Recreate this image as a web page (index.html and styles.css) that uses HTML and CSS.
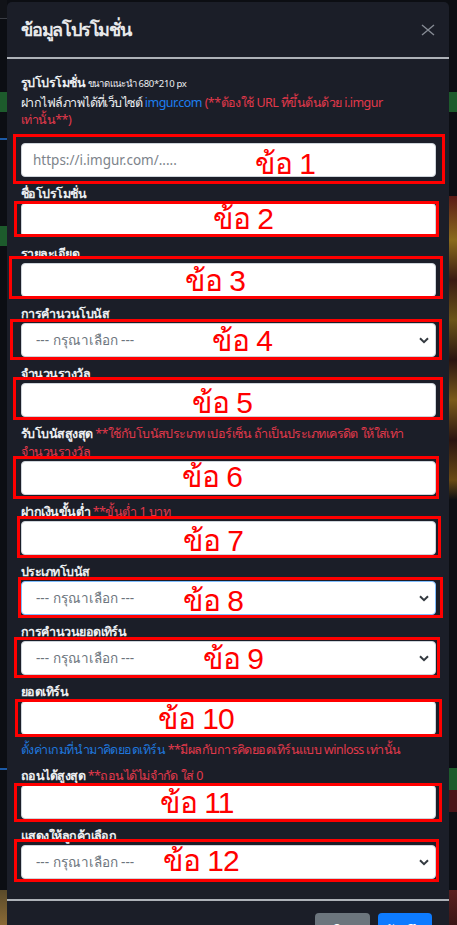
FILE: index.html
```html
<!DOCTYPE html>
<html lang="th">
<head>
<meta charset="utf-8">
<title>ข้อมูลโปรโมชั่น</title>
<link rel="stylesheet" href="styles.css">
</head>
<body>
<div class="modal">
  <div class="modal-header">
    <h5 class="modal-title">ข้อมูลโปรโมชั่น</h5>
    <button class="close" type="button" aria-label="Close">
      <svg width="14" height="12" viewBox="0 0 14 12"><path d="M1 1L13 11M13 1L1 11" stroke="currentColor" stroke-width="1.4" fill="none"/></svg>
    </button>
  </div>
  <div class="modal-body">
    <div class="group first">
      <div class="label l-top"><b>รูปโปรโมชั่น</b> <small>ขนาดแนะนำ 680*210 px</small></div>
      <div class="label l-info">ฝากไฟล์ภาพได้ที่เว็บไซต์ <a class="link">imgur.com</a> <span class="red">(**ต้องใช้ URL ที่ขึ้นต้นด้วย i.imgur<br>เท่านั้น**)</span></div>
      <div class="field m1"><input class="control" type="text" placeholder="https://i.imgur.com/....."><div class="box"></div><span class="tag">ข้อ 1</span></div>
    </div>
    <div class="group">
      <div class="label">ชื่อโปรโมชั่น</div>
      <div class="field m2"><input class="control" type="text"><div class="box"></div><span class="tag">ข้อ 2</span></div>
    </div>
    <div class="group">
      <div class="label">รายละเอียด</div>
      <div class="field m3"><input class="control" type="text"><div class="box"></div><span class="tag">ข้อ 3</span></div>
    </div>
    <div class="group">
      <div class="label">การคำนวนโบนัส</div>
      <div class="field m4"><select class="control select"><option>--- กรุณาเลือก ---</option></select><svg class="chev" width="10" height="7" viewBox="0 0 10 7"><path d="M1 1.2L5 5.2L9 1.2" stroke="#343a40" stroke-width="2" fill="none"/></svg><div class="box"></div><span class="tag">ข้อ 4</span></div>
    </div>
    <div class="group">
      <div class="label">จำนวนรางวัล</div>
      <div class="field m5"><input class="control" type="text"><div class="box"></div><span class="tag">ข้อ 5</span></div>
    </div>
    <div class="group">
      <div class="label">รับโบนัสสูงสุด <span class="red">**ใช้กับโบนัสประเภท เปอร์เซ็น ถ้าเป็นประเภทเครดิต ให้ใส่เท่า<br>จำนวนรางวัล</span></div>
      <div class="field m6"><input class="control" type="text"><div class="box"></div><span class="tag">ข้อ 6</span></div>
    </div>
    <div class="group">
      <div class="label">ฝากเงินขั้นต่ำ <span class="red">**ขั้นต่ำ 1 บาท</span></div>
      <div class="field m7"><input class="control" type="text"><div class="box"></div><span class="tag">ข้อ 7</span></div>
    </div>
    <div class="group">
      <div class="label">ประเภทโบนัส</div>
      <div class="field m8"><select class="control select focus"><option>--- กรุณาเลือก ---</option></select><svg class="chev" width="10" height="7" viewBox="0 0 10 7"><path d="M1 1.2L5 5.2L9 1.2" stroke="#343a40" stroke-width="2" fill="none"/></svg><div class="box"></div><span class="tag">ข้อ 8</span></div>
    </div>
    <div class="group">
      <div class="label">การคำนวนยอดเทิร์น</div>
      <div class="field m9"><select class="control select"><option>--- กรุณาเลือก ---</option></select><svg class="chev" width="10" height="7" viewBox="0 0 10 7"><path d="M1 1.2L5 5.2L9 1.2" stroke="#343a40" stroke-width="2" fill="none"/></svg><div class="box"></div><span class="tag">ข้อ 9</span></div>
    </div>
    <div class="group">
      <div class="label">ยอดเทิร์น</div>
      <div class="field m10"><input class="control" type="text"><div class="box"></div><span class="tag">ข้อ 10</span></div>
      <div class="help"><span class="blue">ตั้งค่าเกมที่นำมาคิดยอดเทิร์น</span> <span class="red">**มีผลกับการคิดยอดเทิร์นแบบ winloss เท่านั้น</span></div>
    </div>
    <div class="group">
      <div class="label">ถอนได้สูงสุด <span class="red">**ถอนได้ไม่จำกัด ใส่ 0</span></div>
      <div class="field m11"><input class="control" type="text"><div class="box"></div><span class="tag">ข้อ 11</span></div>
    </div>
    <div class="group">
      <div class="label">แสดงให้ลูกค้าเลือก</div>
      <div class="field m12"><select class="control select"><option>--- กรุณาเลือก ---</option></select><svg class="chev" width="10" height="7" viewBox="0 0 10 7"><path d="M1 1.2L5 5.2L9 1.2" stroke="#343a40" stroke-width="2" fill="none"/></svg><div class="box"></div><span class="tag">ข้อ 12</span></div>
    </div>
  </div>
  <div class="modal-footer">
    <button class="btn btn-secondary" type="button">ปิด</button>
    <button class="btn btn-primary" type="button">บันทึก</button>
  </div>
</div>
</body>
</html>
```
FILE: styles.css
```css
* { box-sizing: border-box; }

html, body {
  margin: 0;
  height: 925px;
  overflow: hidden;
}

body {
  padding: 2px 8px 0 7px;
  font-family: "Noto Sans", "Open Sans", sans-serif;
  font-size: 12.5px;
  letter-spacing: -0.55px;
  color: #e9ecef;
  background-color: #0c0e13;
  background-image:
    linear-gradient(to bottom, #111318 0, #111318 18px, #3a3d44 18px, #3a3d44 19px, #0c0e13 19px, #0c0e13 92px, #1d5b2c 92px, #1d5b2c 112px, #0c0e13 112px, #0c0e13 138px, #1c5aa6 138px, #1c5aa6 140px, #0c0e13 140px, #0c0e13 226px, #1d5b2c 226px, #1d5b2c 246px, #0c0e13 246px, #0c0e13 768px, #1c5aa6 768px, #1c5aa6 770px, #0c0e13 770px, #0c0e13 890px, #5a4a2a 890px, #8a6a36 925px),
    linear-gradient(to bottom, #0c0e13 0, #0c0e13 92px, #1d5b2c 92px, #1d5b2c 112px, #0c0e13 112px, #0c0e13 196px, #5a1a16 196px, #8a6b1c 240px, #3a1a12 280px, #6b5418 320px, #2a1410 360px, #7a5a1a 400px, #2a1410 440px, #6a4a14 480px, #0c0e13 500px, #0c0e13 768px, #1d5b2c 768px, #1d5b2c 790px, #4a1418 790px, #4a1418 812px, #0c0e13 812px, #0c0e13 890px, #5a2020 890px, #3a1616 925px);
  background-size: 7px 925px, 8px 925px;
  background-position: left top, right top;
  background-repeat: no-repeat;
}

.modal {
  width: 442px;
  background: #1b1e28;
  border-radius: 5px;
}

.modal-header {
  display: flex;
  align-items: center;
  padding: 13px 14px 14px 14px;
  border-bottom: 2px solid #aeb2b8;
}

.modal-title {
  margin: 0;
  font-size: 18px;
  letter-spacing: -1.2px;
  line-height: 28px;
  font-weight: 600;
  color: #e8e9eb;
}

.close {
  margin-left: auto;
  padding: 0;
  border: 0;
  background: none;
  color: #858a93;
  display: flex;
  margin-top: 2px;
}

.modal-body {
  padding: 14px 13px 20px 14px;
}

.group + .group {
  margin-top: 8px;
}

.label {
  font-weight: 700;
  line-height: 18px;
  color: #eceef1;
}

.l-top {
  line-height: 20px;
}

.l-top small {
  font-size: 9.5px;
  font-weight: 400;
  letter-spacing: -0.3px;
}

.l-info {
  font-weight: 400;
  line-height: 17px;
  margin-bottom: 15px;
}

.red {
  color: #e2394b;
  font-weight: 400;
}

.link {
  color: #1d7ff0;
}

.blue {
  color: #1f76dc;
}

.help {
  margin-top: 6px;
  line-height: 18px;
}

.field {
  position: relative;
}

.control {
  display: block;
  width: 100%;
  height: 34px;
  margin: 0;
  padding: 0 11px;
  border: 1px solid #ced4da;
  border-radius: 4px;
  background: #ffffff;
  font-family: "Noto Sans", "Open Sans", sans-serif;
  font-size: 13.5px;
  letter-spacing: 0;
  color: #495057;
  outline: none;
}

.control::placeholder {
  color: #7d848b;
}

.select {
  appearance: none;
  -webkit-appearance: none;
  padding-left: 14px;
  color: #6c757d;
}

.select.focus {
  border-color: #80bdff;
}

.chev {
  position: absolute;
  right: 7px;
  top: 14px;
}

.box {
  position: absolute;
  border: 3px solid #ff0000;
}

.tag {
  position: absolute;
  top: 50%;
  transform: translateY(-50%);
  font-family: "Liberation Sans", sans-serif;
  font-size: 30px;
  letter-spacing: -1px;
  line-height: 31px;
  color: #ff0000;
  white-space: nowrap;
}

.m1 .box { left: -8px; right: -9px; top: -9px; bottom: -7px; }
.m1 .tag { left: 234px; margin-top: 3px; }
.m2 .box { left: -7px; right: -3px; top: -2px; bottom: 0; }
.m2 .tag { left: 192px; margin-top: -2px; }
.m3 .box { left: -12px; right: -7px; top: -7px; bottom: -2px; }
.m3 .tag { left: 164px; }
.m4 .box { left: -11px; right: -6px; top: -4px; bottom: -3px; }
.m4 .tag { left: 191px; }
.m5 .box { left: -8px; right: -7px; top: -6px; bottom: -3px; }
.m5 .tag { left: 171px; margin-top: 2px; }
.m6 .box { left: -8px; right: -3px; top: -5px; bottom: -4px; }
.m6 .tag { left: 161px; margin-top: -2px; }
.m7 .box { left: -4px; right: -5px; top: -5px; bottom: -3px; }
.m7 .tag { left: 162px; margin-top: 2px; }
.m8 .box { left: -3px; right: -7px; top: -4px; bottom: -3px; }
.m8 .tag { left: 162px; margin-top: 2px; }
.m9 .box { left: -7px; right: -4px; top: -4px; bottom: -3px; }
.m9 .tag { left: 182px; }
.m10 .box { left: -6px; right: -6px; top: -2px; bottom: -2px; }
.m10 .tag { left: 137px; }
.m11 .box { left: -7px; right: -6px; top: -2px; bottom: -3px; }
.m11 .tag { left: 139px; }
.m12 .box { left: -7px; right: -3px; top: -6px; bottom: -3px; }
.m12 .tag { left: 142px; margin-top: -2px; }

.modal-footer {
  display: flex;
  justify-content: flex-end;
  gap: 8px;
  padding: 12px 17px 13px 14px;
  border-top: 2px solid #aeb2b8;
}

.btn {
  height: 38px;
  border: 0;
  border-radius: 4px;
  padding: 6px 0 0;
  display: flex;
  justify-content: center;
  align-items: flex-start;
  font-family: "Noto Sans", "Open Sans", sans-serif;
  font-size: 16px;
  line-height: 24px;
  letter-spacing: 0;
  color: #ffffff;
}

.btn-secondary {
  width: 55px;
  background: #6c757d;
}

.btn-primary {
  width: 54px;
  background: #0d7bff;
}
```
